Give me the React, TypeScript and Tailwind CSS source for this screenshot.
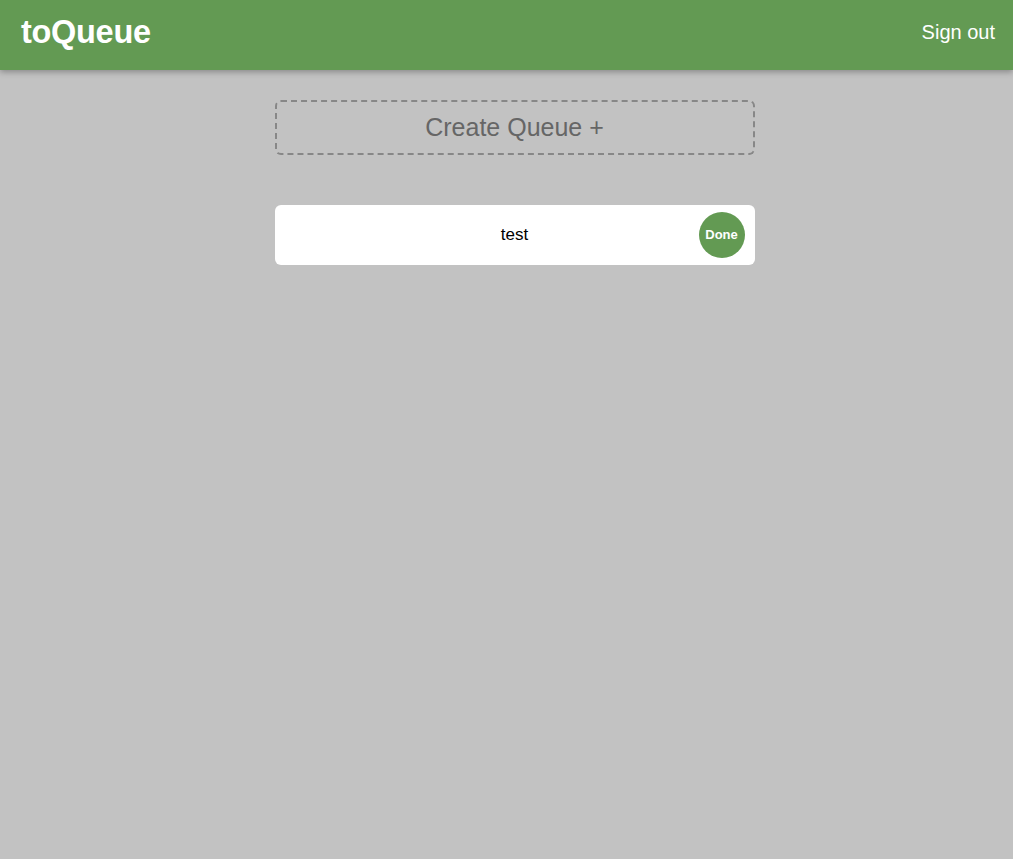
export default function App() {
  const queues = [{ id: 1, name: "test" }];

  return (
    <div className="min-h-screen bg-[#c2c2c2] font-['Liberation_Sans',Arial,sans-serif]">
      <header className="h-[70px] bg-[#639a53] flex items-center justify-between pl-[21px] pr-[18px] pb-[6px] shadow-[0_2px_6px_rgba(0,0,0,0.3)]">
        <h1 className="text-[32.5px] font-bold text-white tracking-[-0.3px]">toQueue</h1>
        <button className="text-[20px] text-white">Sign out</button>
      </header>

      <div className="pl-4">
        <main className="w-[480px] mx-auto pt-[30px] flex flex-col gap-[50px]">
          <button className="h-[55px] w-full border-2 border-dashed border-[#878787] rounded-[6px] text-[25px] text-[#666666]">
            Create Queue +
          </button>

          <div className="flex flex-col gap-3">
            {queues.map((q) => (
              <div
                key={q.id}
                className="relative h-[60px] bg-white rounded-[6px] flex items-center justify-center"
              >
                <span className="text-[17px] text-black">{q.name}</span>
                <button className="absolute right-[10px] top-[7px] w-[46px] h-[46px] rounded-full bg-[#639a53] text-white text-[13px] font-bold flex items-center justify-center">
                  Done
                </button>
              </div>
            ))}
          </div>
        </main>
      </div>
    </div>
  );
}
